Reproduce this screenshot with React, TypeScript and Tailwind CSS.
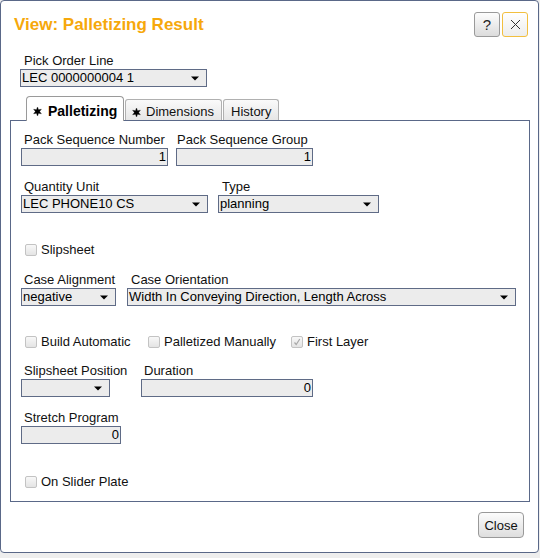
import React from "react";

function Arrow() {
  return (
    <svg width="8" height="5" viewBox="0 0 8 5" className="shrink-0">
      <path d="M0 0.5H8L4 4.5Z" fill="#000" />
    </svg>
  );
}

function Select({ value, className }: { value: string; className: string }) {
  return (
    <div
      className={
        "flex h-[18px] items-center justify-between border border-[#5f6b86] bg-[#ececec] pl-[1px] pr-[7px] text-[13px] leading-[16px] text-black " +
        className
      }
    >
      <span className="whitespace-nowrap">{value}</span>
      <Arrow />
    </div>
  );
}

function Input({ value, className }: { value: string; className: string }) {
  return (
    <div
      className={
        "flex h-[18px] items-center justify-end border border-[#5f6b86] bg-[#ececec] pr-[1px] text-[13px] leading-[16px] text-black " +
        className
      }
    >
      {value}
    </div>
  );
}

function Label({ children, className = "" }: { children: React.ReactNode; className?: string }) {
  return (
    <span className={"whitespace-nowrap text-[13px] leading-[16px] text-[#111] " + className}>
      {children}
    </span>
  );
}

function Check({ label, checked = false, className = "" }: { label: string; checked?: boolean; className?: string }) {
  return (
    <div className={"flex h-[16px] items-center " + className}>
      <span className="flex h-[12px] w-[12px] items-center justify-center rounded-[2px] border border-[#c3c3c3] bg-linear-to-b from-[#f8f8f8] to-[#e4e4e4]">
        {checked && (
          <svg width="8" height="8" viewBox="0 0 8 8">
            <path d="M1.5 4.5L3.2 6.5L6.8 1" fill="none" stroke="#a8a8a8" strokeWidth="1.2" />
          </svg>
        )}
      </span>
      <span className="ml-[4px] whitespace-nowrap text-[13px] leading-[16px] text-[#111]">{label}</span>
    </div>
  );
}

function Star() {
  return (
    <svg width="9" height="9" viewBox="0 0 8 8" className="shrink-0">
      <path
        d="M4 0L4.95 2.35L7.46 2L5.9 4L7.46 6L4.95 5.65L4 8L3.05 5.65L0.54 6L2.1 4L0.54 2L3.05 2.35Z"
        fill="#000"
        stroke="#000"
        strokeWidth="0.3"
      />
    </svg>
  );
}

export default function App() {
  return (
    <div className="h-[558px] w-[540px] bg-[#eeeeee] font-['Liberation_Sans',Arial,sans-serif]">
      <div className="flex h-[553px] w-[539px] flex-col rounded-[4px] border border-[#5a6888] bg-white">
        {/* Header */}
        <div className="flex items-start justify-between pl-[13px] pr-[10px] pt-[11px]">
          <h1 className="mt-[3px] text-[17px] font-bold leading-[20px] text-[#f6a80b]">
            View: Palletizing Result
          </h1>
          <div className="flex gap-[2px]">
            <button className="flex h-[25px] w-[26px] items-center justify-center rounded-[3px] border border-[#9a9a9a] bg-linear-to-b from-[#fdfdfd] to-[#dcdcdc] text-[15px] leading-none text-[#222]">
              ?
            </button>
            <button className="flex h-[25px] w-[26px] items-center justify-center rounded-[3px] border border-[#f2bf3f] bg-linear-to-b from-[#ffffff] to-[#ededed]">
              <svg width="11" height="11" viewBox="0 0 11 11">
                <path d="M1 1L10 10M10 1L1 10" stroke="#333" strokeWidth="1" />
              </svg>
            </button>
          </div>
        </div>

        {/* Pick Order Line */}
        <div className="ml-[19px] mt-[16px] flex flex-col">
          <Label className="pl-[4px] leading-[15px]">Pick Order Line</Label>
          <Select value="LEC 0000000004 1" className="w-[187px]" />
        </div>

        {/* Tabs */}
        <div className="relative z-10 mb-[-1px] ml-[25px] mt-[9px] flex items-end gap-[1px]">
          <div className="flex h-[25px] w-[98px] items-center gap-[6px] rounded-t-[4px] border border-b-0 border-[#9a9a9a] bg-white pl-[6px] pt-[4px]">
            <Star />
            <span className="text-[14px] font-bold leading-[16px] text-black">Palletizing</span>
          </div>
          <div className="mb-[1px] flex h-[21px] w-[97px] items-center gap-[5px] rounded-t-[3px] border border-b-0 border-[#b0b0b0] bg-linear-to-b from-[#fafafa] to-[#e6e6e6] pl-[6px] pt-[4px]">
            <Star />
            <span className="text-[13px] leading-[16px] text-[#111]">Dimensions</span>
          </div>
          <div className="mb-[1px] flex h-[21px] w-[56px] items-center rounded-t-[3px] border border-b-0 border-[#b0b0b0] bg-linear-to-b from-[#fafafa] to-[#e6e6e6] pl-[7px] pt-[4px]">
            <span className="text-[13px] leading-[16px] text-[#111]">History</span>
          </div>
        </div>

        {/* Panel */}
        <div className="ml-[9px] flex w-[520px] flex-col border border-[#5a6888] pb-[11px] pl-[10px] pt-[11px]">
          {/* Row 1 */}
          <div className="flex">
            <div className="flex w-[155px] flex-col">
              <Label className="pl-[3px]">Pack Sequence Number</Label>
              <Input value="1" className="w-[147px]" />
            </div>
            <div className="flex flex-col">
              <Label className="pl-[1px]">Pack Sequence Group</Label>
              <Input value="1" className="w-[137px]" />
            </div>
          </div>

          {/* Row 2 */}
          <div className="mt-[13px] flex">
            <div className="flex w-[197px] flex-col">
              <Label className="pl-[3px]">Quantity Unit</Label>
              <Select value="LEC PHONE10 CS" className="w-[187px]" />
            </div>
            <div className="flex flex-col">
              <Label className="pl-[4px]">Type</Label>
              <Select value="planning" className="w-[161px]" />
            </div>
          </div>

          {/* Row 3 */}
          <Check label="Slipsheet" className="ml-[4px] mt-[29px]" />

          {/* Row 4 */}
          <div className="mt-[14px] flex">
            <div className="flex w-[106px] flex-col">
              <Label className="pl-[3px]">Case Alignment</Label>
              <Select value="negative" className="w-[95px]" />
            </div>
            <div className="flex flex-col">
              <Label className="pl-[4px]">Case Orientation</Label>
              <Select value="Width In Conveying Direction, Length Across" className="w-[389px]" />
            </div>
          </div>

          {/* Row 5 */}
          <div className="ml-[4px] mt-[28px] flex">
            <Check label="Build Automatic" className="w-[123px]" />
            <Check label="Palletized Manually" className="w-[143px]" />
            <Check label="First Layer" checked />
          </div>

          {/* Row 6 */}
          <div className="mt-[13px] flex">
            <div className="flex w-[120px] flex-col">
              <Label className="pl-[3px]">Slipsheet Position</Label>
              <Select value="" className="w-[89px]" />
            </div>
            <div className="flex flex-col">
              <Label className="pl-[3px]">Duration</Label>
              <Input value="0" className="w-[172px]" />
            </div>
          </div>

          {/* Row 7 */}
          <div className="mt-[13px] flex flex-col">
            <Label className="pl-[3px]">Stretch Program</Label>
            <Input value="0" className="w-[100px]" />
          </div>

          {/* Row 8 */}
          <Check label="On Slider Plate" className="ml-[4px] mt-[30px]" />
        </div>

        {/* Footer */}
        <div className="mt-[10px] flex justify-end pr-[14px]">
          <button className="flex h-[26px] w-[46px] items-center justify-center rounded-[4px] border border-[#999] bg-linear-to-b from-[#fcfcfc] to-[#dedede] text-[13px] leading-none text-[#111]">
            Close
          </button>
        </div>
      </div>
    </div>
  );
}
